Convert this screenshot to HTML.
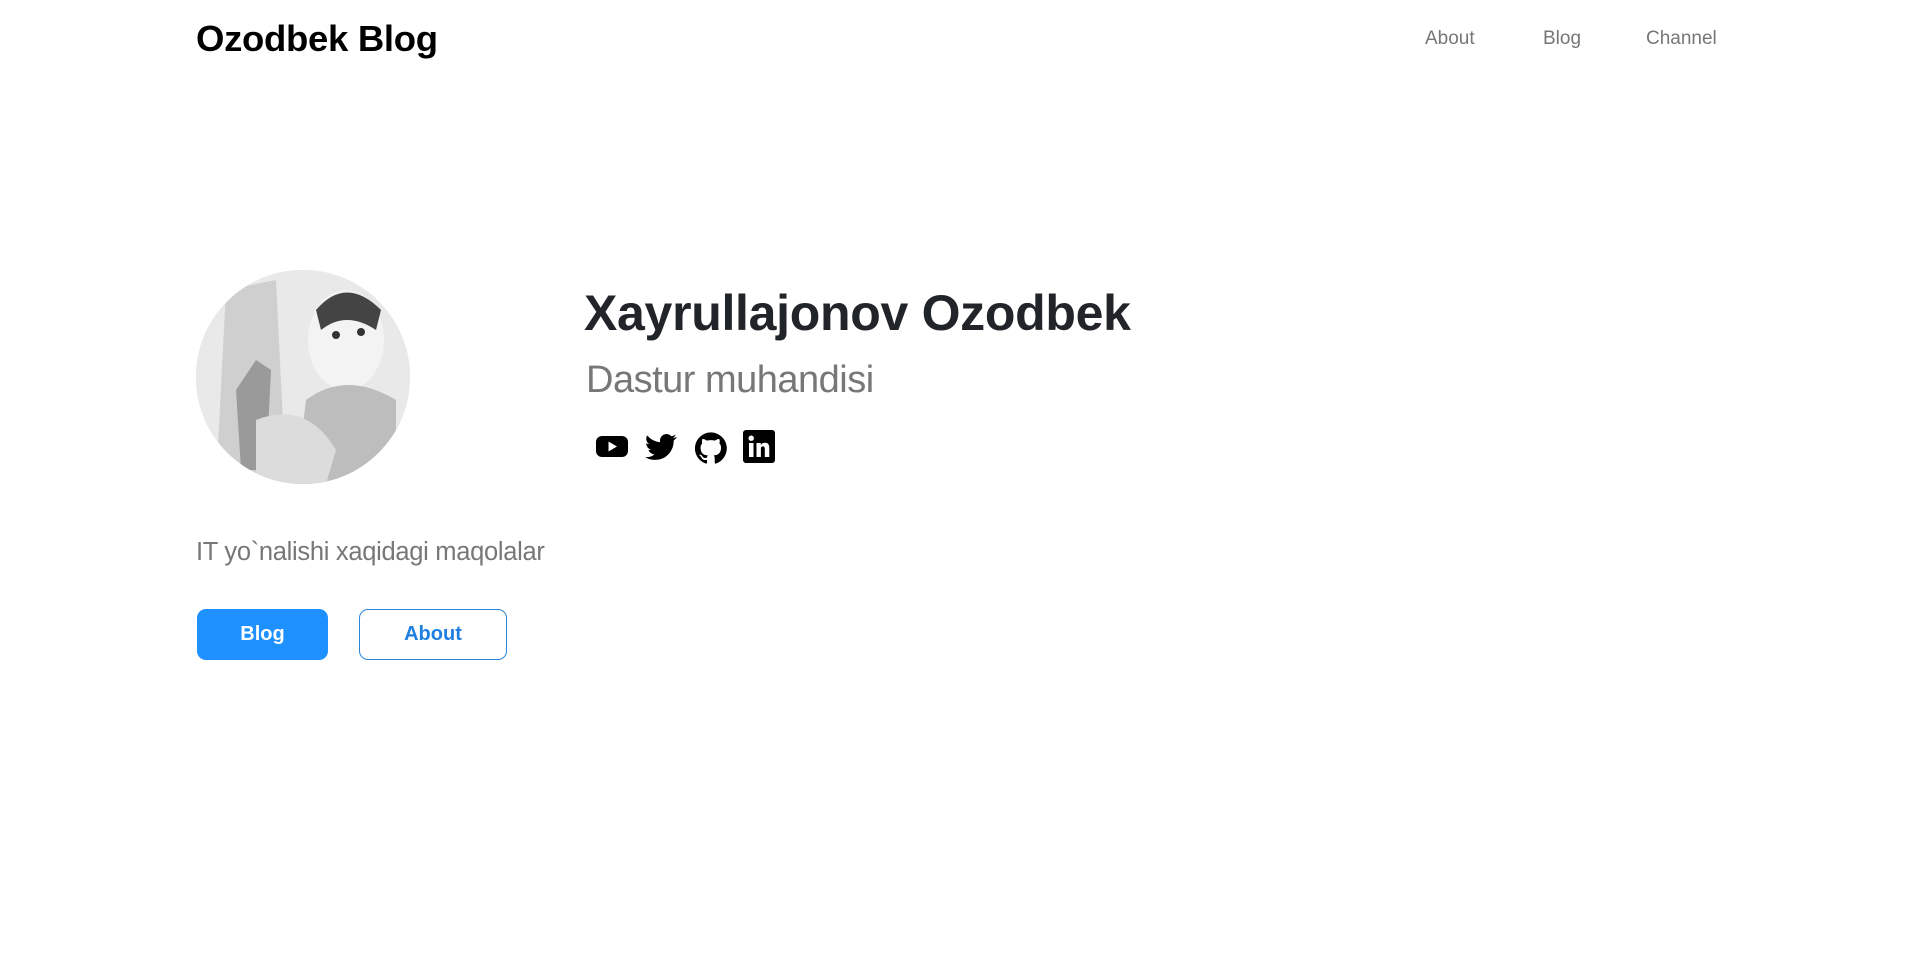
<!DOCTYPE html>
<html><head><meta charset="utf-8"><style>
*{margin:0;padding:0;box-sizing:border-box}
body{width:1916px;height:961px;background:#fff;font-family:"Liberation Sans",sans-serif;position:relative;overflow:hidden}
.a{position:absolute;white-space:nowrap}
.logo{left:196px;top:18px;font-size:36.5px;font-weight:bold;color:#000;letter-spacing:-0.3px}
.nav{top:28px;font-size:19px;color:#777}
.av{left:196px;top:270px;width:214px;height:214px;border-radius:50%;overflow:hidden;background:radial-gradient(circle at 60% 35%,#f4f4f4 0,#ddd 40%,#bbb 75%,#e8e8e8 100%)}
.name{left:584px;top:284px;font-size:50px;font-weight:bold;color:#212529;letter-spacing:-0.3px}
.sub{left:586px;top:359px;font-size:38px;color:#777;letter-spacing:-0.5px}
.tag{left:196px;top:538px;font-size:25.5px;color:#777;letter-spacing:-0.3px}
.btn{top:611px;height:51px;border-radius:9px;font-size:20px;font-weight:bold;display:flex;align-items:center;justify-content:center}
</style></head><body>
<div class="a logo">Ozodbek Blog</div>
<div class="a nav" style="left:1425px">About</div>
<div class="a nav" style="left:1543px">Blog</div>
<div class="a nav" style="left:1646px">Channel</div>
<div class="a av">
<svg width="214" height="214" viewBox="0 0 214 214">
<rect x="0" y="0" width="214" height="214" fill="#e9e9e9"/>
<path d="M30 20 L80 10 L90 214 L20 214 Z" fill="#cfcfcf"/>
<path d="M40 120 L60 90 L75 100 L70 200 L45 200 Z" fill="#9a9a9a"/>
<ellipse cx="150" cy="70" rx="38" ry="50" fill="#f3f3f3"/>
<path d="M120 40 Q150 5 185 40 L180 60 Q150 40 125 60 Z" fill="#444"/>
<circle cx="140" cy="65" r="4" fill="#333"/><circle cx="165" cy="62" r="4" fill="#333"/>
<path d="M110 130 Q150 100 200 130 L200 214 L100 214 Z" fill="#bdbdbd"/>
<path d="M60 150 Q110 130 140 180 L130 214 L60 214 Z" fill="#dcdcdc"/>
</svg></div>
<div class="a name">Xayrullajonov Ozodbek</div>
<div class="a sub">Dastur muhandisi</div>
<svg class="a" style="left:596px;top:430px" width="32" height="34" viewBox="0 0 32 34"><rect x="0" y="6" width="32" height="21" rx="6" fill="#000"/><path d="M12.5 11.5 L21 16.5 L12.5 21.5 Z" fill="#fff"/></svg>
<svg class="a" style="left:645px;top:431px" width="32" height="32" viewBox="0 0 24 24"><path fill="#000" d="M23.6 4.6c-.9.4-1.8.6-2.8.8 1-.6 1.8-1.6 2.100-2.7-.9.6-2 1-3.1 1.2A4.9 4.9 0 0 0 11.4 8.4 13.9 13.9 0 0 1 1.6 3.3a4.9 4.9 0 0 0 1.5 6.5c-.8 0-1.6-.2-2.2-.6 0 2.4 1.7 4.4 3.9 4.8-.7.2-1.5.2-2.2.1.6 2 2.4 3.4 4.600 3.4A9.9 9.9 0 0 1 0 19.5 13.9 13.9 0 0 0 7.5 21.7c9.1 0 14-7.5 14-14v-.6c1-.7 1.8-1.6 2.5-2.5z"/></svg>
<svg class="a" style="left:695px;top:432px" width="32" height="32" viewBox="0 0 24 24"><path fill="#000" d="M12 .3a12 12 0 0 0-3.8 23.4c.6.1.8-.3.8-.6v-2.2c-3.3.7-4-1.4-4-1.4-.6-1.4-1.4-1.8-1.4-1.8-1-.7.1-.7.1-.7 1.2.1 1.8 1.2 1.8 1.2 1 1.8 2.8 1.3 3.5 1 0-.8.4-1.3.7-1.6-2.7-.3-5.5-1.3-5.5-5.9 0-1.3.5-2.4 1.2-3.2 0-.4-.5-1.6.2-3.2 0 0 1-.3 3.3 1.2a11.5 11.5 0 0 1 6 0c2.3-1.5 3.300-1.2 3.300-1.2.7 1.6.2 2.8.1 3.2.8.8 1.2 1.9 1.2 3.2 0 4.6-2.8 5.6-5.5 5.9.5.4.8 1.1.8 2.2v3.3c0 .3.2.7.8.6A12 12 0 0 0 12 .3"/></svg>
<svg class="a" style="left:743px;top:430px" width="32" height="33" viewBox="0 0 32 33"><rect x="0" y="0" width="32" height="33" rx="3" fill="#000"/><rect x="6" y="13" width="4.5" height="14" fill="#fff"/><circle cx="8.2" cy="8.2" r="2.7" fill="#fff"/><path d="M13.5 13h4.3v2c.8-1.4 2.3-2.3 4.2-2.3 3.4 0 4.3 2.2 4.3 5.2V27h-4.5v-8c0-1.6-.5-2.6-1.9-2.6-1.6 0-2 1.2-2 2.8V27h-4.4z" fill="#fff"/></svg>
<div class="a tag">IT yo`nalishi xaqidagi maqolalar</div>
<div class="a btn" style="left:197px;top:609px;width:131px;background:#1e90ff;color:#fff">Blog</div>
<div class="a btn" style="left:359px;top:609px;width:148px;border:1.5px solid #2b86d9;color:#1e7fe0">About</div>
</body></html>
